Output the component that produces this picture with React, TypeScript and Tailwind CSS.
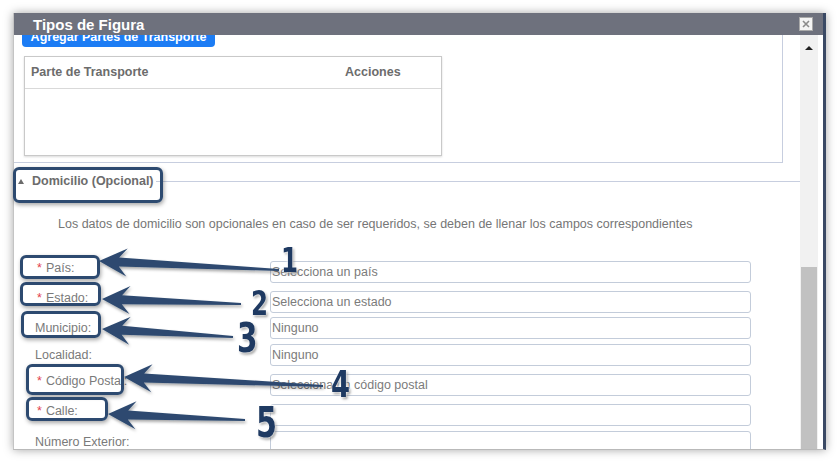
import React from 'react';

type Row = { label: string; required: boolean; value: string; gap: string };

const ROWS: Row[] = [
  { label: 'País:', required: true, value: 'Selecciona un país', gap: 'mt-[29px]' },
  { label: 'Estado:', required: true, value: 'Selecciona un estado', gap: 'mt-[8px]' },
  { label: 'Municipio:', required: false, value: 'Ninguno', gap: 'mt-[4px]' },
  { label: 'Localidad:', required: false, value: 'Ninguno', gap: 'mt-[5px]' },
  { label: 'Código Postal:', required: true, value: 'Selecciona un código postal', gap: 'mt-[8px]' },
  { label: 'Calle:', required: true, value: '', gap: 'mt-[8px]' },
  { label: 'Número Exterior:', required: false, value: '', gap: 'mt-[5px]' },
];

// annotation arrows: tip (at the label box) -> tail (near the number)
const ARROWS: [number, number, number, number][] = [
  [99, 261, 279, 270],
  [102, 299, 241, 304],
  [102, 329, 233, 337],
  [124, 377, 323, 386],
  [108, 414, 245, 420],
];

const arrowPoints = (tx: number, ty: number, ex: number, ey: number) => {
  const dx = ex - tx;
  const dy = ey - ty;
  const len = Math.hypot(dx, dy);
  const ux = dx / len;
  const uy = dy / len;
  const nx = -uy;
  const ny = ux;
  const p = (a: number, b: number) => `${(tx + ux * a + nx * b).toFixed(1)},${(ty + uy * a + ny * b).toFixed(1)}`;
  return [p(0, 0), p(28, 14), p(20, 4.5), p(len, 1), p(len, -1), p(20, -4.5), p(28, -14)].join(' ');
};

const NUMBERS = [
  { n: '1', cls: 'left-[281px] top-[243px] text-[34px]' },
  { n: '2', cls: 'left-[251px] top-[286px] text-[34px]' },
  { n: '3', cls: 'left-[237px] top-[318px] text-[41px]' },
  { n: '4', cls: 'left-[331px] top-[365px] text-[38px]' },
  { n: '5', cls: 'left-[256px] top-[402px] text-[42px]' },
];

const BOXES = [
  'left-[13px] top-[167px] w-[150px] h-[36px]',
  'left-[20px] top-[255px] w-[80px] h-[24px]',
  'left-[20px] top-[282px] w-[81px] h-[24px]',
  'left-[21px] top-[311px] w-[80px] h-[27px]',
  'left-[26px] top-[364px] w-[98px] h-[31px]',
  'left-[26px] top-[397px] w-[82px] h-[24px]',
];

export default function App() {
  return (
    <div className="relative w-[840px] h-[464px] overflow-hidden bg-white font-['Liberation_Sans',Arial,sans-serif]">
      <div className="pt-[13px] pl-[13px]">
        <div className="flex flex-col w-[813px] h-[437px] bg-white border-l border-[#c4c4c4] border-r-[3px] border-r-[#3a4964] border-b border-b-[#b9b9b9] shadow-[0_0_9px_rgba(0,0,0,0.35)]">

          {/* Title bar */}
          <div className="relative z-10 flex items-center justify-between h-[22px] bg-[#6e717d] pl-[19px] pr-[10px] shrink-0">
            <span className="text-[15px] font-bold text-white leading-none">Tipos de Figura</span>
            <div className="flex items-center justify-center w-[14px] h-[14px] bg-[#f4f4f4] border border-[#a9a9a9]">
              <svg width="8" height="8" viewBox="0 0 8 8">
                <path d="M1 1L7 7M7 1L1 7" stroke="#8b8b8b" strokeWidth="1.6" />
              </svg>
            </div>
          </div>

          {/* Body */}
          <div className="flex flex-1 min-h-0">
            <div className="flex-1 min-w-0 overflow-hidden">

              {/* Transport parts fieldset */}
              <div className="mr-[17px] pb-[6px] border-r border-b border-[#c7cedf]">
                <div className="-mt-[12px] ml-[8px] w-[193px] h-[24px] pt-[4px] rounded-[4px] bg-[#1c7cf4] flex items-center justify-center text-[12.5px] font-bold text-white">
                  Agregar Partes de Transporte
                </div>
                <div className="mt-[9px] ml-[10px] w-[418px] h-[100px] border border-[#c9c9c9] shadow-[0_1px_2px_rgba(0,0,0,0.15)]">
                  <div className="flex items-center h-[32px] border-b border-[#d9d9d9] px-[6px] text-[12.5px] font-bold text-[#6c6c6c]">
                    <span className="w-[314px]">Parte de Transporte</span>
                    <span>Acciones</span>
                  </div>
                </div>
              </div>

              {/* Domicilio legend */}
              <div className="flex items-center h-[16px] mt-[10px]">
                <svg className="ml-[4px]" width="6" height="5" viewBox="0 0 6 5">
                  <path d="M0 5L3 0L6 5Z" fill="#6b6b6b" />
                </svg>
                <span className="ml-[8px] text-[12.5px] font-bold text-[#6c6c6c]">Domicilio (Opcional)</span>
                <div className="flex-1 ml-[2px] border-t border-[#c7cedf]" />
              </div>

              <p className="mt-[27px] ml-[44px] text-[12.5px] leading-[16px] text-[#767676]">
                Los datos de domicilio son opcionales en caso de ser requeridos, se deben de llenar los campos correspondientes
              </p>

              {/* Address form */}
              <div className="ml-[21px]">
                {ROWS.map(row => (
                  <div key={row.label} className={`flex items-start ${row.gap}`}>
                    <div className={`w-[235px] text-[12.5px] leading-[16px] text-[#7a7a7a] ${row.required ? '-mt-[1px]' : 'pt-[3px]'}`}>
                      {row.required && <span className="text-[#e2404a] mr-[4px] ml-[2px]">*</span>}
                      {row.label}
                    </div>
                    <div className="w-[481px] h-[22px] rounded-[3px] border border-[#c3ccda] bg-white px-[1px] flex items-center text-[12.5px] text-[#7b7b7b]">
                      {row.value}
                    </div>
                  </div>
                ))}
              </div>
            </div>

            {/* Scrollbar */}
            <div className="flex flex-col w-[18px] bg-[#f1f1f1] shrink-0">
              <div className="flex justify-center pt-[11px] h-[232px]">
                <svg width="8" height="4" viewBox="0 0 8 4">
                  <path d="M0 4L4 0L8 4Z" fill="#202020" />
                </svg>
              </div>
              <div className="flex-1 mx-[1px] bg-[#c1c1c1]" />
            </div>
            <div className="w-[5px] shrink-0" />
          </div>
        </div>
      </div>

      {/* Annotations */}
      {BOXES.map(cls => (
        <div
          key={cls}
          className={`absolute ${cls} rounded-[6px] border-[3px] border-[#2d4a70] shadow-[1px_2px_4px_rgba(0,0,0,0.35)] pointer-events-none`}
        />
      ))}
      <svg className="absolute left-0 top-0 pointer-events-none" width="840" height="464">
        <defs>
          <filter id="ashadow" x="-20%" y="-50%" width="140%" height="200%">
            <feDropShadow dx="1" dy="2" stdDeviation="1.6" floodColor="#000" floodOpacity="0.35" />
          </filter>
        </defs>
        {ARROWS.map(([tx, ty, ex, ey], i) => (
          <polygon key={i} points={arrowPoints(tx, ty, ex, ey)} fill="#2d4a70" filter="url(#ashadow)" />
        ))}
      </svg>
      {NUMBERS.map(({ n, cls }) => (
        <div
          key={n}
          className={`absolute ${cls} leading-none font-black font-stretch-condensed font-['DejaVu_Sans',sans-serif] text-[#1f3a62] scale-x-[0.8] origin-left [text-shadow:0_0_2px_#fff,0_0_4px_#fff,2px_2px_3px_rgba(0,0,0,0.45)] pointer-events-none`}
        >
          {n}
        </div>
      ))}
    </div>
  );
}
